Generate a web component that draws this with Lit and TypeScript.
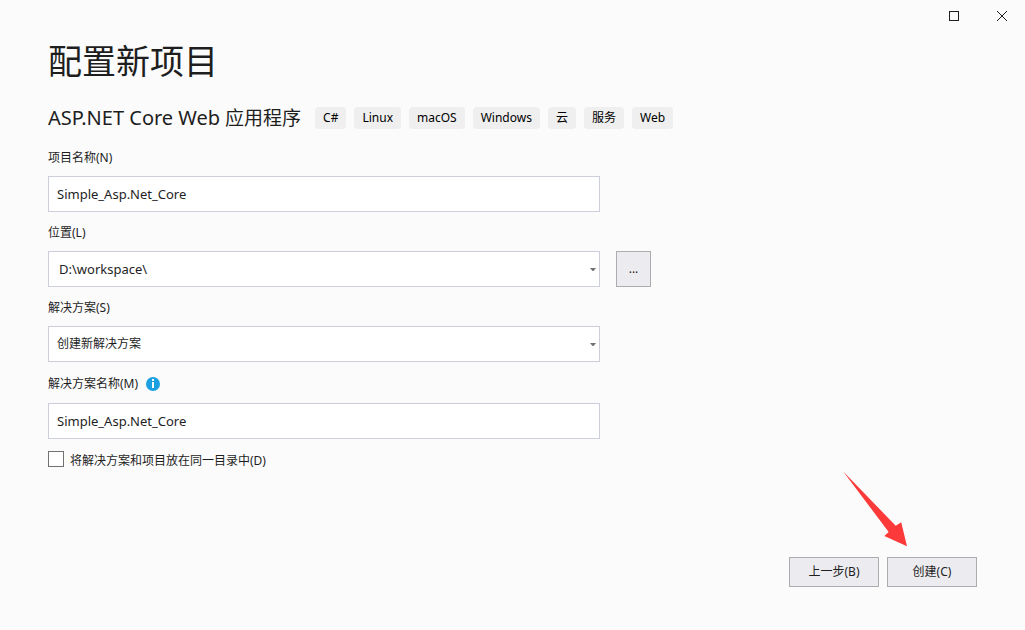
import { LitElement, html, css } from "lit";
import { customElement, property, state } from "lit/decorators.js";

@customElement("drop-arrow")
class DropArrow extends LitElement {
  static styles = css`
    :host {
      display: block;
      width: 6px;
      height: 3px;
    }
    .glyph {
      display: block;
    }
  `;
  render() {
    return html`<svg class="glyph" width="6" height="3" viewBox="0 0 6 3" aria-hidden="true">
      <path d="M0 0h6L3.5 3h-1z" fill="#717171" />
    </svg>`;
  }
}

@customElement("window-controls")
class WindowControls extends LitElement {
  static styles = css`
    :host {
      display: flex;
      justify-content: flex-end;
      height: 32px;
    }
    .control {
      display: grid;
      place-items: center;
      width: 48px;
      padding: 0 0 0 2px;
      border: 0;
      background: none;
    }
    .control:hover {
      background: #e6e6ec;
    }
  `;
  render() {
    return html`
      <button class="control" aria-label="最大化">
        <svg width="10" height="10" viewBox="0 0 10 10">
          <rect x=".5" y=".5" width="9" height="9" fill="none" stroke="#1e1e1e" />
        </svg>
      </button>
      <button class="control" aria-label="关闭">
        <svg width="10" height="10" viewBox="0 0 10 10">
          <path d="M0 0l10 10M10 0L0 10" fill="none" stroke="#1e1e1e" />
        </svg>
      </button>
    `;
  }
}

@customElement("app-root")
export class AppRoot extends LitElement {
  @property({ attribute: false }) tags = ["C#", "Linux", "macOS", "Windows", "云", "服务", "Web"];
  @state() private projectName = "Simple_Asp.Net_Core";
  @state() private solutionName = "Simple_Asp.Net_Core";

  static styles = css`
    :host {
      display: flex;
      flex-direction: column;
      box-sizing: border-box;
      min-height: 100vh;
      padding-bottom: 43px;
      background: #fbfbfb;
      color: #1e1e1e;
      font-family: "Noto Sans", "Noto Sans CJK SC", sans-serif;
      font-size: 12px;
      line-height: 20px;
    }
    * {
      box-sizing: border-box;
    }
    .page {
      display: flex;
      flex: 1;
      flex-direction: column;
      padding: 0 48px;
    }
    .title {
      margin: 0;
      font-size: 34px;
      font-weight: 400;
      line-height: 58px;
    }
    .template {
      display: flex;
      flex-wrap: wrap;
      align-items: center;
      gap: 8px 14px;
      margin-top: 12px;
    }
    .template-name {
      margin: 0;
      font-size: 19px;
      font-weight: 400;
      line-height: 32px;
    }
    .product {
      font-size: 20px;
    }
    .tags {
      display: flex;
      flex-wrap: wrap;
      gap: 8px;
      margin: 0;
      padding: 0;
      list-style: none;
    }
    .tag {
      padding: 0 8px;
      border-radius: 4px;
      background: #efefef;
      color: #000;
      line-height: 22px;
    }
    .form {
      display: grid;
      grid-template-columns: minmax(0, 552px) 35px;
      gap: 11px 16px;
      margin-top: 14px;
    }
    .field {
      display: grid;
      grid-column: 1;
      gap: 8px;
    }
    .label-row {
      display: flex;
      align-items: center;
      gap: 8px;
      min-height: 22px;
    }
    .info {
      display: block;
    }
    .box {
      width: 100%;
      height: 36px;
      margin: 0;
      padding: 0 8px;
      border: 1px solid #cccedb;
      border-radius: 0;
      background: #fff;
      color: #1e1e1e;
      font: inherit;
      font-size: 13px;
      appearance: none;
    }
    .box.path {
      padding-left: 10px;
    }
    .box.choice {
      font-size: 12px;
    }
    .picker {
      display: grid;
      align-items: center;
    }
    .picker > * {
      grid-area: 1 / 1;
    }
    .arrow {
      justify-self: end;
      margin-right: 4px;
      pointer-events: none;
    }
    .button {
      height: 30px;
      padding: 0;
      border: 1px solid #acacac;
      border-radius: 0;
      background: #ececf0;
      color: #1e1e1e;
      font: inherit;
    }
    .button:hover {
      background: #c9def5;
    }
    .browse {
      align-self: end;
      height: 36px;
    }
    .same-folder {
      display: flex;
      grid-column: 1;
      align-items: flex-start;
      gap: 6px;
      padding-top: 1px;
    }
    .check {
      width: 16px;
      height: 16px;
      margin: 0;
      border: 1px solid #717171;
      background: #fff;
      appearance: none;
    }
    .check:checked {
      background: #717171;
      box-shadow: inset 0 0 0 3px #fff;
    }
    .actions {
      position: relative;
      display: flex;
      gap: 8px;
      align-self: flex-end;
      margin-top: auto;
    }
    .actions .button {
      width: 90px;
    }
    .pointer {
      position: absolute;
      right: 68px;
      bottom: calc(100% + 10px);
      pointer-events: none;
    }
  `;

  private onProjectName(e: Event) {
    this.projectName = (e.target as HTMLInputElement).value;
  }

  private onSolutionName(e: Event) {
    this.solutionName = (e.target as HTMLInputElement).value;
  }

  render() {
    return html`
      <window-controls></window-controls>
      <main class="page">
        <h1 class="title">配置新项目</h1>
        <div class="template">
          <h2 class="template-name"><span class="product">ASP.NET Core Web</span> 应用程序</h2>
          <ul class="tags">
            ${this.tags.map((tag) => html`<li class="tag">${tag}</li>`)}
          </ul>
        </div>

        <div class="form">
          <div class="field">
            <label for="project">项目名称(N)</label>
            <input class="box" id="project" type="text" .value=${this.projectName} @input=${this.onProjectName} />
          </div>

          <div class="field">
            <label for="location">位置(L)</label>
            <div class="picker">
              <select class="box path" id="location">
                <option>D:\\workspace\\</option>
              </select>
              <drop-arrow class="arrow"></drop-arrow>
            </div>
          </div>
          <button class="button browse" aria-label="浏览">...</button>

          <div class="field">
            <label for="solution">解决方案(S)</label>
            <div class="picker">
              <select class="box choice" id="solution">
                <option>创建新解决方案</option>
              </select>
              <drop-arrow class="arrow"></drop-arrow>
            </div>
          </div>

          <div class="field">
            <div class="label-row">
              <label for="solution-name">解决方案名称(M)</label>
              <svg class="info" width="14" height="14" viewBox="0 0 14 14" aria-hidden="true">
                <circle cx="7" cy="7" r="7" fill="#1ba1e2" />
                <path d="M6 2h2v2H6zM6 5h2v6H6z" fill="#fff" />
              </svg>
            </div>
            <input class="box" id="solution-name" type="text" .value=${this.solutionName} @input=${this.onSolutionName} />
          </div>

          <div class="same-folder">
            <input class="check" id="same-folder" type="checkbox" />
            <label for="same-folder">将解决方案和项目放在同一目录中(D)</label>
          </div>
        </div>

        <div class="actions">
          <button class="button">上一步(B)</button>
          <button class="button">创建(C)</button>
          <svg class="pointer" width="66" height="76" viewBox="0 0 66 76" aria-hidden="true">
            <path d="M0 .3L52.7 54.7 58.2 51.3 64 75.3 41.3 65 45.7 61z" fill="#fc3a3a" />
          </svg>
        </div>
      </main>
    `;
  }
}
